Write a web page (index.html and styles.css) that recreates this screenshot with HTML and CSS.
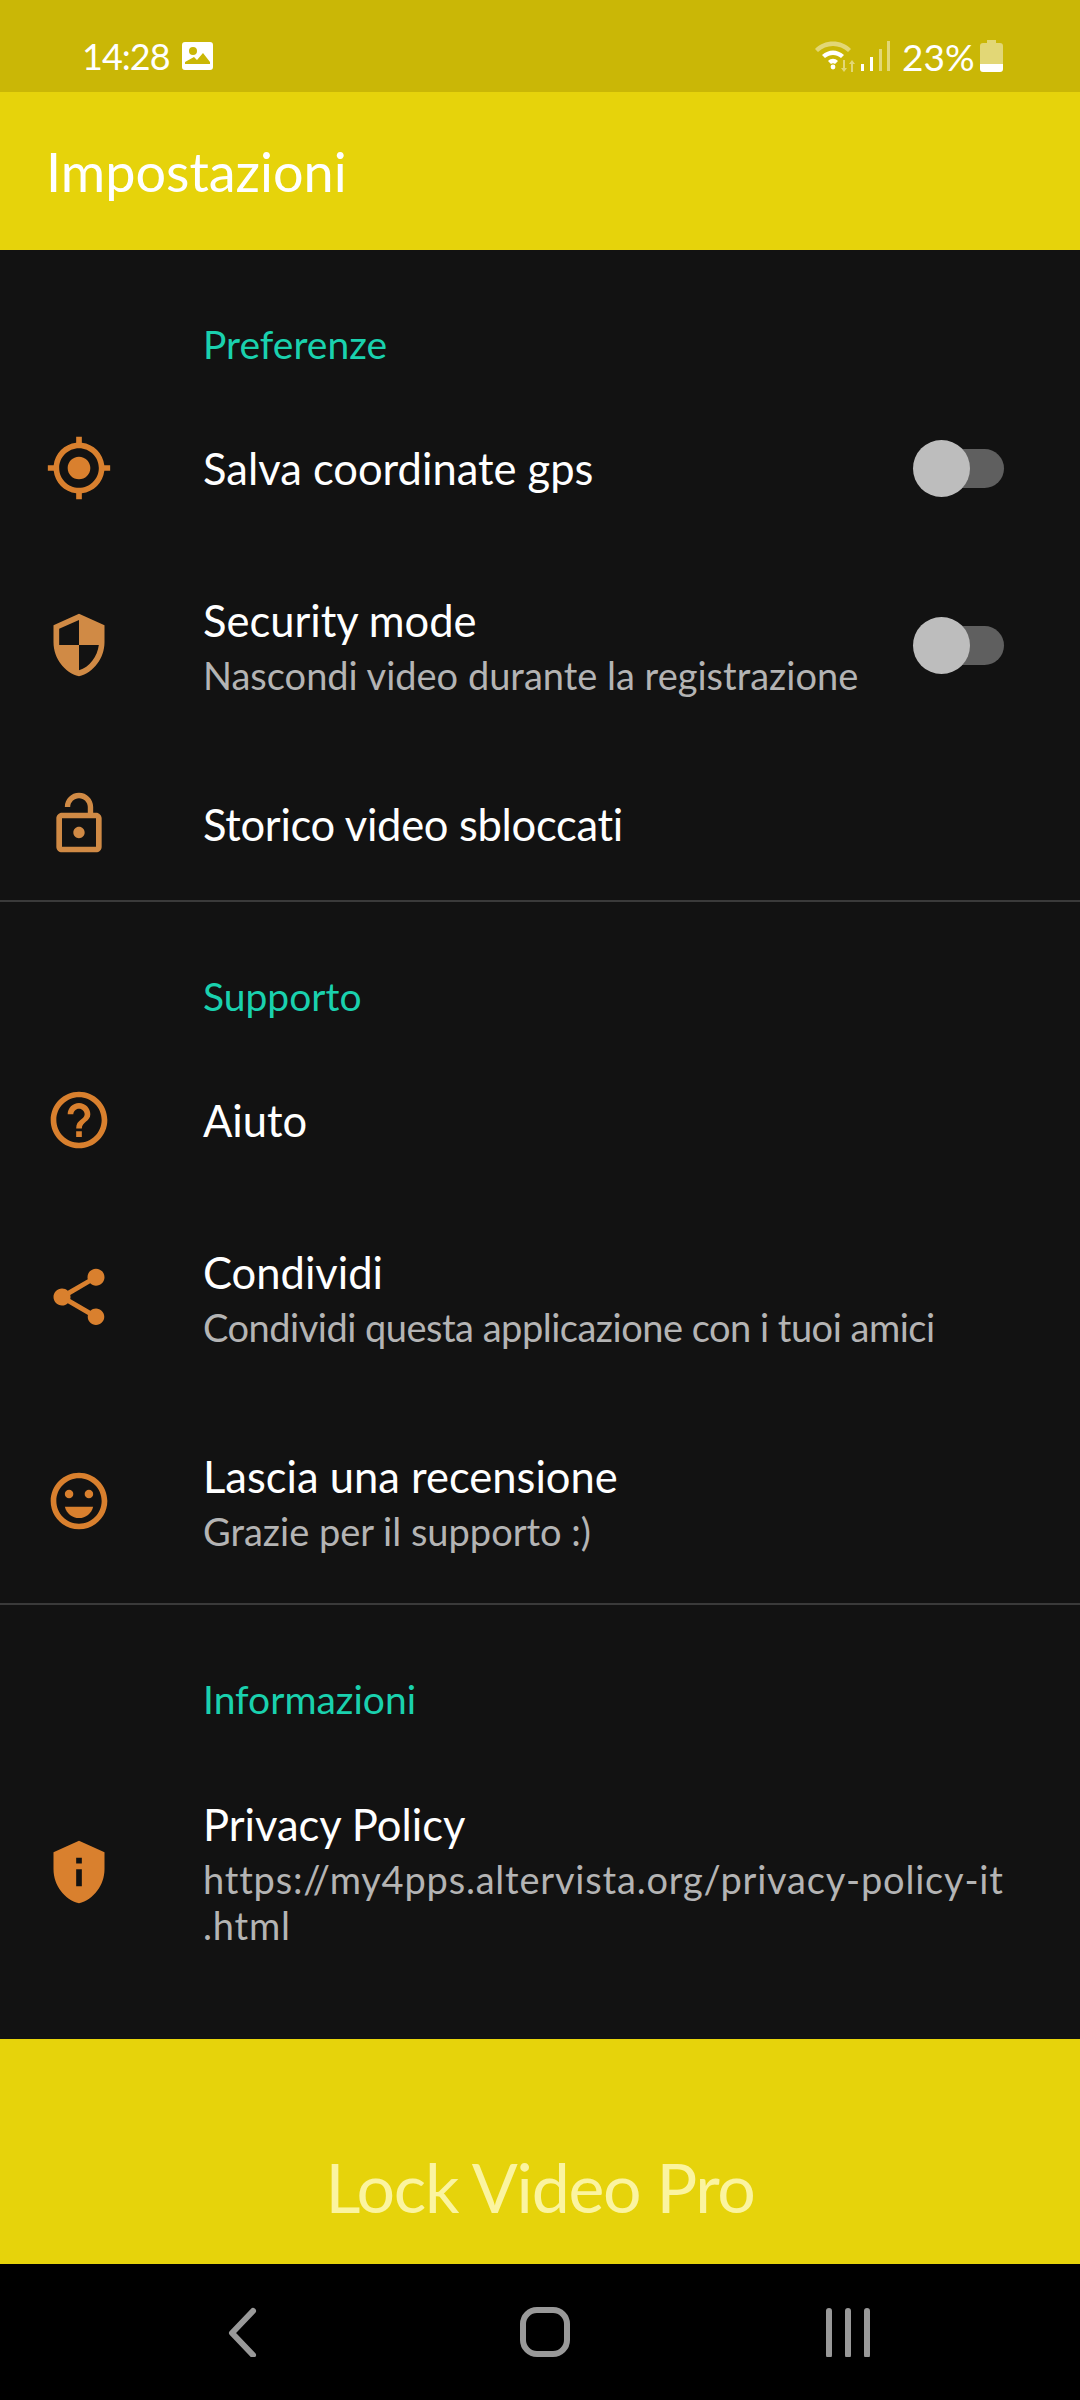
FILE: index.html
```html
<!DOCTYPE html>
<html lang="it">
<head>
    <meta charset="UTF-8">
    <meta name="viewport" content="width=device-width, initial-scale=1.0">
    <title>Impostazioni | Lock Video</title>
    <link rel="stylesheet" href="styles.css">
</head>
<body>
    <div class="screen">
        <div class="status-bar">
            <div class="status-left">
                <span class="clock">14:28</span>
                <svg class="status-img" viewBox="0 0 31 28"><path fill-rule="evenodd" d="M3 0h25a3 3 0 0 1 3 3v22a3 3 0 0 1-3 3H3a3 3 0 0 1-3-3V3a3 3 0 0 1 3-3zm8 5a4 4 0 1 0 0 8 4 4 0 0 0 0-8zM3 20v2h25v-2l-7-9-6 7-3-3z"/></svg>
            </div>
            <div class="status-right">
                <svg class="status-wifi" viewBox="0 0 42 32">
                    <path class="dim" d="M1 9C10-1 28-1 37 9l-3 3C26 4 12 4 4 12z"/>
                    <path d="M8 15c7-6 15-6 22 0l-3 3c-5-4-11-4-16 0zM14 21c3-3 7-3 10 0l-3 3c-1-1-3-1-4 0z"/>
                    <circle cx="19" cy="27" r="2.4"/>
                    <path class="dim" d="M29 20h2v8h2l-3 4-3-4h2zM37 32h2v-8h2l-3-4-3 4h2z"/>
                </svg>
                <svg class="status-signal" viewBox="0 0 30 30">
                    <rect x="0" y="23" width="3" height="7"/>
                    <rect x="9" y="16" width="3" height="14"/>
                    <rect class="dim" x="18" y="8" width="3" height="22"/>
                    <rect class="dim" x="26" y="0" width="3" height="30"/>
                </svg>
                <span class="battery-pct">23%</span>
                <svg class="status-battery" viewBox="0 0 23 32">
                    <path class="dim" d="M7 0h9v3h4a3 3 0 0 1 3 3v18H0V6a3 3 0 0 1 3-3h4z"/>
                    <path d="M0 24h23v5a3 3 0 0 1-3 3H3a3 3 0 0 1-3-3z"/>
                </svg>
            </div>
        </div>

        <div class="app-bar">Impostazioni</div>

        <div class="settings">
            <section class="group">
                <h3 class="group-title">Preferenze</h3>
                <div class="row">
                    <svg class="icon" viewBox="0 0 24 24"><path d="M12 8c-2.21 0-4 1.79-4 4s1.79 4 4 4 4-1.79 4-4-1.79-4-4-4zm8.94 3c-.46-4.17-3.77-7.48-7.94-7.94V1h-2v2.06C6.83 3.52 3.52 6.83 3.06 11H1v2h2.06c.46 4.17 3.77 7.48 7.94 7.94V23h2v-2.06c4.17-.46 7.48-3.77 7.94-7.94H23v-2h-2.06zM12 19c-3.87 0-7-3.13-7-7s3.13-7 7-7 7 3.13 7 7-3.13 7-7 7z"/></svg>
                    <div class="row-text"><div class="row-title">Salva coordinate gps</div></div>
                    <div class="switch"><span class="thumb"></span></div>
                </div>
                <div class="row row-two">
                    <svg class="icon icon-pale" viewBox="0 0 24 24"><path d="M12 1L3 5v6c0 5.55 3.84 10.74 9 12 5.16-1.26 9-6.45 9-12V5l-9-4zm0 10.99h7c-.53 4.12-3.28 7.79-7 8.94V12H5V6.3l7-3.11v8.8z"/></svg>
                    <div class="row-text">
                        <div class="row-title">Security mode</div>
                        <div class="row-sub">Nascondi video durante la registrazione</div>
                    </div>
                    <div class="switch"><span class="thumb"></span></div>
                </div>
                <div class="row row-last">
                    <svg class="icon icon-pale" viewBox="0 0 24 24"><path d="M12 17c1.1 0 2-.9 2-2s-.9-2-2-2-2 .9-2 2 .9 2 2 2zm6-9h-1V6c0-2.76-2.24-5-5-5S7 3.24 7 6h1.9c0-1.71 1.39-3.1 3.1-3.1 1.71 0 3.1 1.39 3.1 3.1v2H6c-1.1 0-2 .9-2 2v10c0 1.1.9 2 2 2h12c1.1 0 2-.9 2-2V10c0-1.1-.9-2-2-2zm0 12H6V10h12v10z"/></svg>
                    <div class="row-text"><div class="row-title row-title-tight">Storico video sbloccati</div></div>
                </div>
            </section>

            <section class="group">
                <h3 class="group-title">Supporto</h3>
                <div class="row">
                    <svg class="icon" viewBox="0 0 24 24"><path d="M11 18h2v-2h-2v2zm1-16C6.48 2 2 6.48 2 12s4.48 10 10 10 10-4.48 10-10S17.52 2 12 2zm0 18c-4.41 0-8-3.59-8-8s3.59-8 8-8 8 3.59 8 8-3.59 8-8 8zm0-14c-2.21 0-4 1.79-4 4h2c0-1.1.9-2 2-2s2 .9 2 2c0 2-3 1.75-3 5h2c0-2.25 3-2.5 3-5 0-2.21-1.79-4-4-4z"/></svg>
                    <div class="row-text"><div class="row-title">Aiuto</div></div>
                </div>
                <div class="row row-two">
                    <svg class="icon" viewBox="0 0 24 24"><path d="M18 16.08c-.76 0-1.44.3-1.96.77L8.91 12.7c.05-.23.09-.46.09-.7s-.04-.47-.09-.7l7.05-4.11c.54.5 1.25.81 2.04.81 1.66 0 3-1.34 3-3s-1.34-3-3-3-3 1.34-3 3c0 .24.04.47.09.7L8.04 9.81C7.5 9.31 6.79 9 6 9c-1.66 0-3 1.34-3 3s1.34 3 3 3c.79 0 1.5-.31 2.04-.81l7.12 4.16c-.05.21-.08.43-.08.65 0 1.61 1.31 2.92 2.92 2.92 1.61 0 2.92-1.31 2.92-2.92s-1.31-2.92-2.92-2.92z"/></svg>
                    <div class="row-text">
                        <div class="row-title">Condividi</div>
                        <div class="row-sub row-sub-tight">Condividi questa applicazione con i tuoi amici</div>
                    </div>
                </div>
                <div class="row row-two">
                    <svg class="icon" viewBox="0 0 24 24"><path d="M12 2C6.48 2 2 6.48 2 12s4.48 10 10 10 10-4.48 10-10S17.52 2 12 2zm0 18c-4.41 0-8-3.59-8-8s3.59-8 8-8 8 3.59 8 8-3.59 8-8 8z"/><circle cx="8.5" cy="9.5" r="1.5"/><circle cx="15.5" cy="9.5" r="1.5"/><path d="M7 14h10c-.6 2.4-2.6 4-5 4s-4.4-1.6-5-4z"/></svg>
                    <div class="row-text">
                        <div class="row-title">Lascia una recensione</div>
                        <div class="row-sub">Grazie per il supporto :)</div>
                    </div>
                </div>
            </section>

            <section class="group group-end">
                <h3 class="group-title">Informazioni</h3>
                <div class="row row-tall">
                    <svg class="icon" viewBox="0 0 24 24"><path fill-rule="evenodd" d="M12 1L3 5v6c0 5.55 3.84 10.74 9 12 5.16-1.26 9-6.45 9-12V5l-9-4zm-1 6h2v2h-2V7zm0 4h2v6h-2v-6z"/></svg>
                    <div class="row-text">
                        <div class="row-title">Privacy Policy</div>
                        <div class="row-sub row-url">https://my4pps.altervista.org/privacy-policy-it<br>.html</div>
                    </div>
                </div>
            </section>
        </div>

        <div class="banner">Lock Video Pro</div>

        <div class="nav-bar">
            <svg class="nav-icon" viewBox="0 0 60 50"><path d="M41 4L20 26l21 22"/></svg>
            <svg class="nav-icon" viewBox="0 0 60 50"><rect x="8" y="3" width="44" height="44" rx="14"/></svg>
            <svg class="nav-icon" viewBox="0 0 60 50"><path d="M11 4v44M30 4v44M49 4v44"/></svg>
        </div>
    </div>
</body>
</html>
```

FILE: styles.css
```css
* {
    margin: 0;
    padding: 0;
    box-sizing: border-box;
}

body {
    background: #121212;
    font-family: 'Lato', sans-serif;
    color: white;
}

.screen {
    width: 1080px;
    height: 2400px;
    display: flex;
    flex-direction: column;
    overflow: hidden;
}

.status-bar {
    height: 92px;
    background: #cab706;
    display: flex;
    justify-content: space-between;
    align-items: center;
    padding: 20px 77px 0 82px;
    color: white;
}

.status-left, .status-right {
    display: flex;
    align-items: center;
}

.clock {
    font-size: 36px;
    letter-spacing: -1px;
    width: 100px;
}

.status-img {
    width: 31px;
    height: 28px;
    fill: white;
}

.status-wifi {
    width: 42px;
    height: 32px;
    fill: white;
}

.status-signal {
    width: 30px;
    height: 30px;
    margin-left: 5px;
    fill: white;
}

.dim {
    opacity: 0.45;
}

.battery-pct {
    font-size: 37px;
    width: 78px;
    margin-left: 11px;
}

.status-battery {
    width: 23px;
    height: 32px;
    fill: white;
}

.app-bar {
    height: 158px;
    background: #e6d30b;
    display: flex;
    align-items: center;
    padding-left: 46px;
    font-size: 54px;
    color: white;
}

.settings {
    flex: 1;
}

.group {
    border-bottom: 2px solid #3a3a3a;
}

.group-end {
    border-bottom: none;
}

.group-title {
    height: 143px;
    padding: 70px 0 0 203px;
    font-size: 39px;
    font-weight: normal;
    line-height: 48px;
    color: #1ad1ae;
}

.row {
    height: 150px;
    display: flex;
    align-items: center;
    padding: 0 76px 0 45px;
}

.row-two {
    height: 204px;
}

.row-last {
    height: 153px;
}

.row-tall {
    height: 247px;
}

.icon {
    width: 68px;
    height: 68px;
    flex-shrink: 0;
    fill: #d9802e;
}

.icon-pale {
    fill: #d08a45;
}

.row-text {
    flex: 1;
    margin-left: 90px;
}

.row-title {
    font-size: 43.5px;
    line-height: 56px;
    color: white;
}

.row-title-tight {
    letter-spacing: -0.3px;
}

.row-sub {
    margin-top: 4px;
    font-size: 38px;
    line-height: 46px;
    color: #b4b4b4;
}

.row-sub-tight {
    letter-spacing: -0.5px;
}

.row-url {
    letter-spacing: 0.8px;
}

.switch {
    position: relative;
    width: 80px;
    height: 39px;
    border-radius: 20px;
    background: #5f5f5f;
}

.thumb {
    position: absolute;
    left: -11px;
    top: -9px;
    width: 57px;
    height: 57px;
    border-radius: 50%;
    background: #bdbdbd;
}

.banner {
    height: 225px;
    background: #e6d30b;
    display: flex;
    justify-content: center;
    align-items: center;
    padding-top: 70px;
    font-size: 68px;
    letter-spacing: -1.3px;
    color: #fbf4a0;
}

.nav-bar {
    height: 136px;
    background: black;
    display: flex;
    justify-content: space-between;
    align-items: center;
    padding: 0 202px 0 212px;
}

.nav-icon {
    width: 60px;
    height: 50px;
    fill: none;
    stroke: #999;
    stroke-width: 6;
    stroke-linecap: round;
    stroke-linejoin: round;
}
```
